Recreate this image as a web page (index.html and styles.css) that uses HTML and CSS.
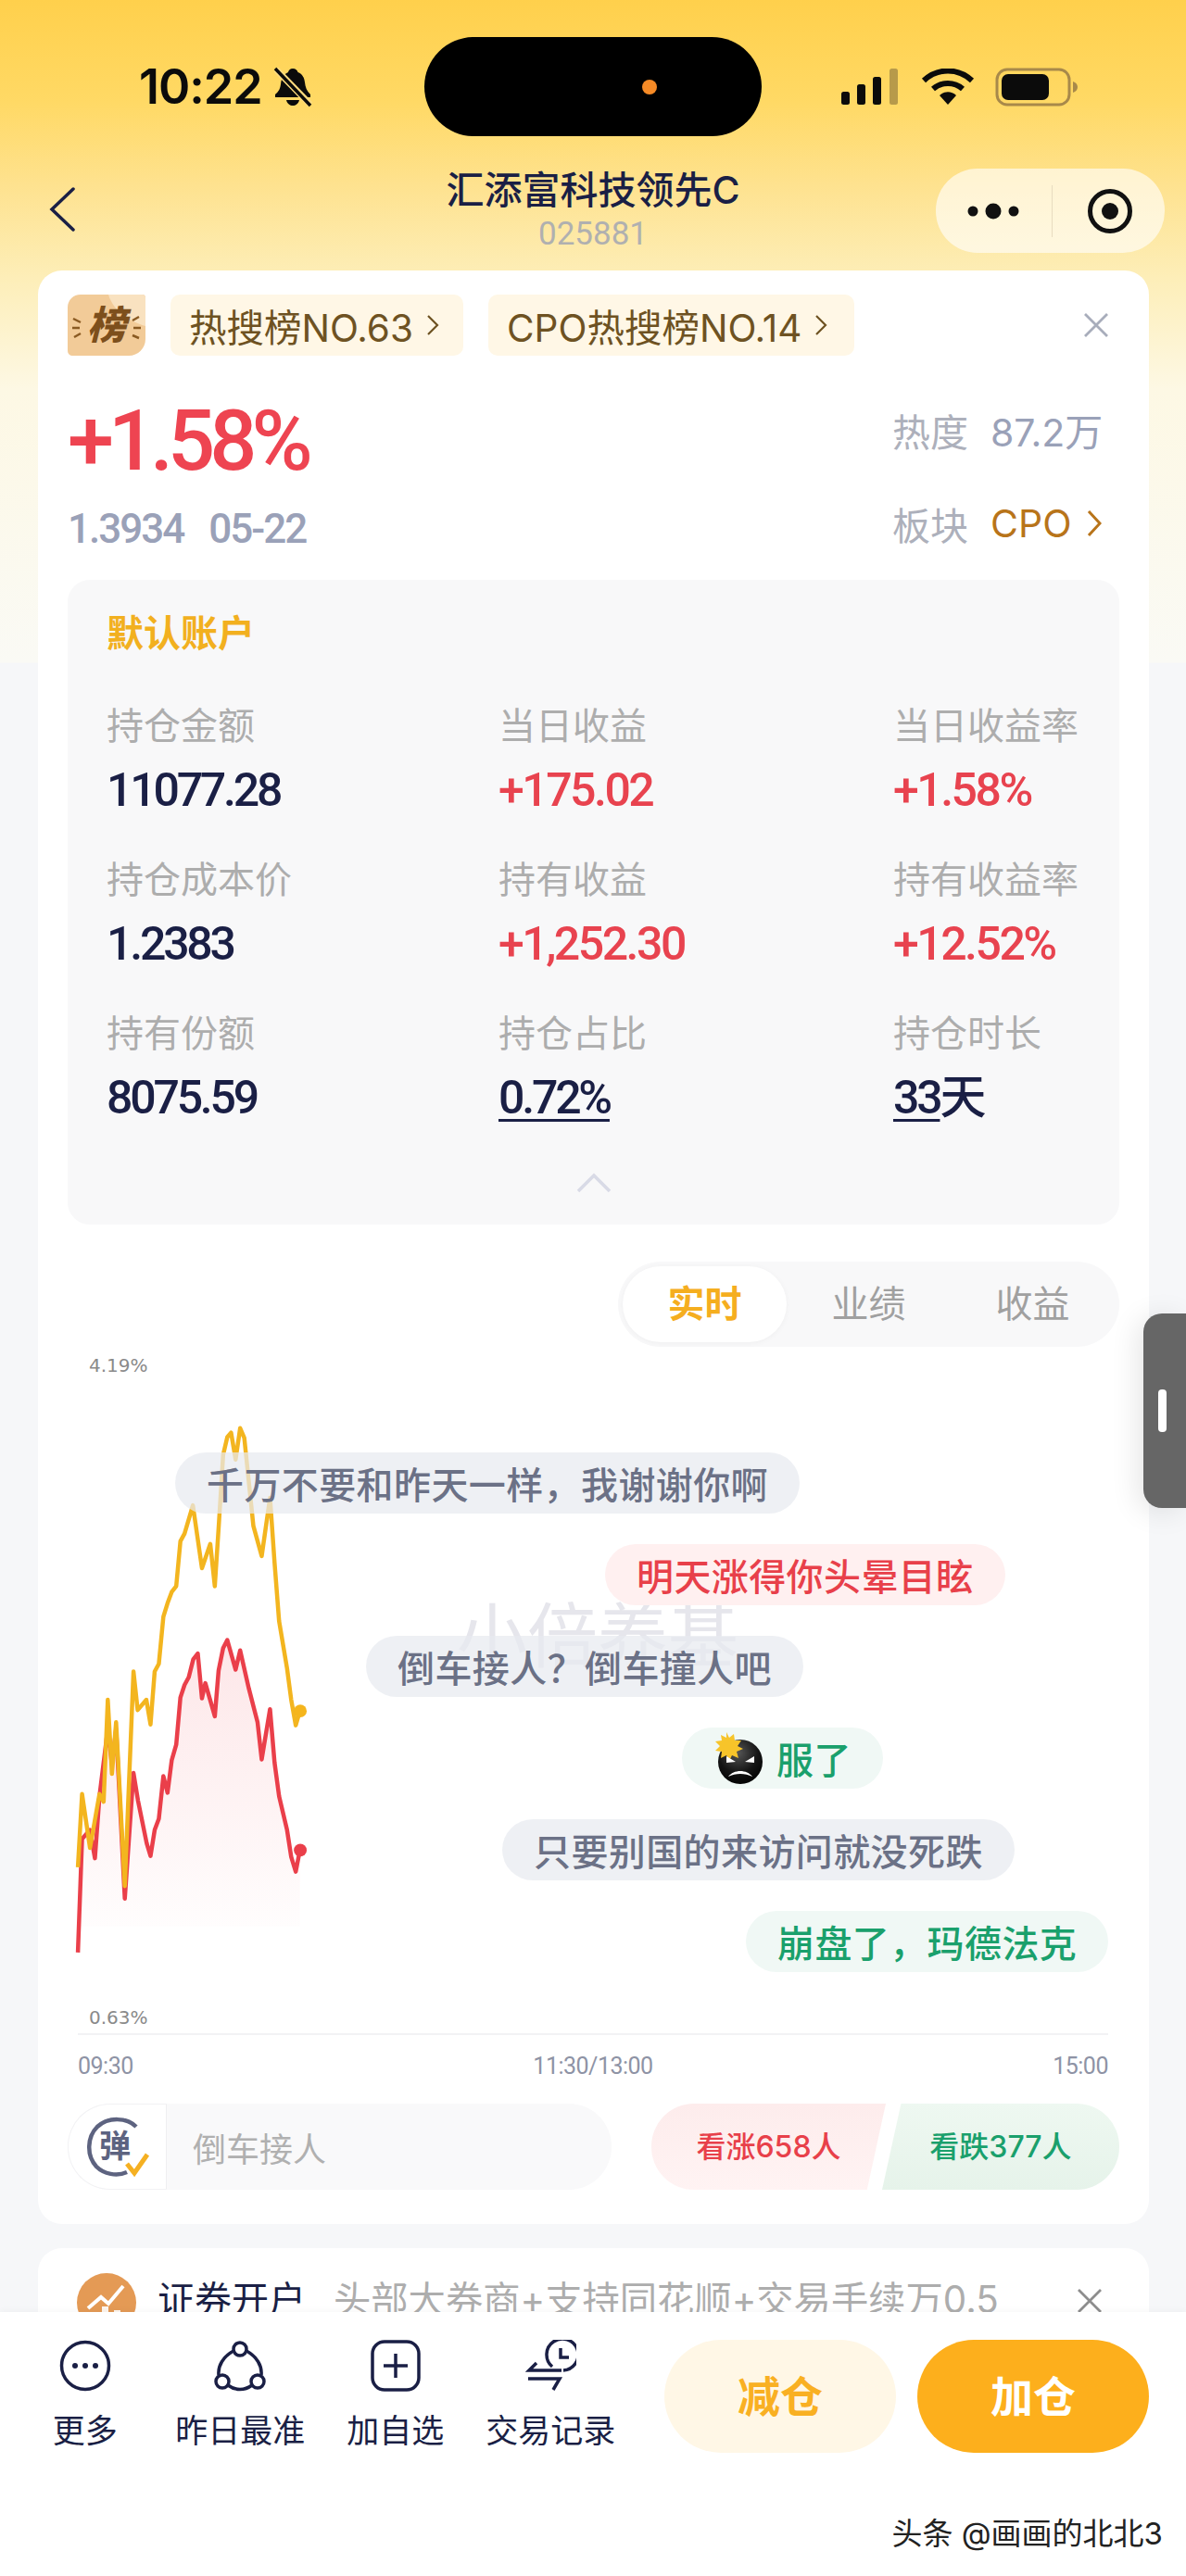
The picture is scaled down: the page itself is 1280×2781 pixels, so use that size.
FILE: index.html

```html
<!DOCTYPE html>
<html lang="zh-CN">
<head>
  <meta charset="UTF-8" />
  <title>汇添富科技领先C</title>
  <link rel="stylesheet" href="styles.css">
</head>
<body>
<div class="page">

  <div class="statusbar">
    <div class="status-left">
      <span class="clock">10:22</span>
      <svg class="bell" width="42" height="44" viewBox="0 0 42 44">
        <path d="M21 2c3 0 5 2 5.500 4 5 2 7 6 7.500 11 .5 5 2 9 6 13v3H2v-3c4-3 5.500-7 6-11 .5-6 3-11 8-13C16.500 4 18 2 21 2z" fill="#0b0b0b"/>
        <path d="M14 36h14c-1 4-4 6-7 6s-6-2-7-6z" fill="#0b0b0b"/>
        <path d="M3 3l37 38" stroke="#fedc7e" stroke-width="7"/>
        <path d="M2 2l38 40" stroke="#0b0b0b" stroke-width="3.500"/>
      </svg>
    </div>
    <div class="island"><i class="island-dot"></i></div>
    <div class="status-right">
      <svg width="64" height="40" viewBox="0 0 64 40">
        <rect x="0" y="25" width="9" height="14" rx="2.500" fill="#0b0b0b"/>
        <rect x="17" y="17" width="9" height="22" rx="2.500" fill="#0b0b0b"/>
        <rect x="34" y="9" width="9" height="30" rx="2.500" fill="#0b0b0b"/>
        <rect x="52" y="0" width="9" height="39" rx="2.500" fill="#b79a4a"/>
      </svg>
      <svg width="58" height="40" viewBox="0 0 58 40">
        <path d="M3 13C18-1 40-1 55 13" fill="none" stroke="#0b0b0b" stroke-width="6"/>
        <path d="M13 22c9-8 23-8 32 0" fill="none" stroke="#0b0b0b" stroke-width="6"/>
        <path d="M20 29c5-5 13-5 18 0L29 39z" fill="#0b0b0b"/>
      </svg>
      <svg width="90" height="42" viewBox="0 0 90 42">
        <rect x="2" y="2" width="78" height="38" rx="11" fill="none" stroke="#a8894a" stroke-width="3"/>
        <rect x="7" y="7" width="51" height="28" rx="7" fill="#0b0b0b"/>
        <path d="M84 15c3 1 5 3 5 6s-2 5-5 6z" fill="#a8894a"/>
      </svg>
    </div>
  </div>

  <div class="navbar">
    <div class="nav-back">
      <svg width="30" height="48" viewBox="0 0 30 48"><path d="M27 2L4 24l23 22" fill="none" stroke="#1a1f45" stroke-width="3.500" stroke-linecap="round"/></svg>
    </div>
    <div class="nav-title">
      <div class="fund-name">汇添富科技领先C</div>
      <div class="fund-code">025881</div>
    </div>
    <div class="capsule">
      <svg class="capsule-dots" width="64" height="20" viewBox="0 0 64 20">
        <circle cx="10" cy="10" r="5.500" fill="#111"/><circle cx="32" cy="10" r="8.500" fill="#111"/><circle cx="54" cy="10" r="5.500" fill="#111"/>
      </svg>
      <i class="capsule-line"></i>
      <svg width="50" height="50" viewBox="0 0 50 50">
        <circle cx="25" cy="25" r="21.500" fill="none" stroke="#111" stroke-width="5"/><circle cx="25" cy="25" r="9" fill="#111"/>
      </svg>
    </div>
  </div>

  <div class="card main-card">
    <div class="tag-row">
      <svg class="rank-badge" width="84" height="66" viewBox="0 0 84 66">
        <path d="M14 0h66c3 0 4 1 4 4v44c0 10-8 18-18 18H6c-4 0-6-2-6-6V14C0 6 6 0 14 0z" fill="#f2cb98"/>
        <path d="M44 0h36c3 0 4 1 4 4v30C70 30 50 20 44 0z" fill="#f9e2c0"/>
        <text x="42" y="48" text-anchor="middle" class="rank-text">榜</text>
        <path d="M6 26l8 4M5 36h8M7 46l7-4M70 28l7-4M71 36h8M70 44l7 3" stroke="#8a5a22" stroke-width="2.500"/>
      </svg>
      <div class="tag tag-one">热搜榜NO.63<svg width="14" height="24" viewBox="0 0 14 24"><path d="M2 2l10 10L2 22" fill="none" stroke="#6e5222" stroke-width="2.200"/></svg></div>
      <div class="tag tag-two">CPO热搜榜NO.14<svg width="14" height="24" viewBox="0 0 14 24"><path d="M2 2l10 10L2 22" fill="none" stroke="#6e5222" stroke-width="2.200"/></svg></div>
      <svg class="tag-close" width="28" height="28" viewBox="0 0 28 28"><path d="M2 2l24 24M26 2L2 26" stroke="#a8adbb" stroke-width="2.800"/></svg>
    </div>

    <div class="quote">
      <div class="quote-left">
        <div class="quote-change">+1.58%</div>
        <div class="quote-sub"><span>1.3934</span><span>05-22</span></div>
      </div>
      <div class="quote-right">
        <div class="quote-row"><span class="quote-label">热度</span><span class="quote-value">87.2万</span></div>
        <div class="quote-row"><span class="quote-label">板块</span><span class="quote-link">CPO</span>
          <svg width="16" height="30" viewBox="0 0 16 30"><path d="M2 2l12 13L2 28" fill="none" stroke="#b8741a" stroke-width="3"/></svg>
        </div>
      </div>
    </div>

    <div class="account">
      <div class="account-title">默认账户</div>
      <div class="account-grid">
        <div class="cell"><div class="cell-label">持仓金额</div><div class="cell-value">11077.28</div></div>
        <div class="cell"><div class="cell-label">当日收益</div><div class="cell-value up">+175.02</div></div>
        <div class="cell"><div class="cell-label">当日收益率</div><div class="cell-value up">+1.58%</div></div>
        <div class="cell"><div class="cell-label">持仓成本价</div><div class="cell-value">1.2383</div></div>
        <div class="cell"><div class="cell-label">持有收益</div><div class="cell-value up">+1,252.30</div></div>
        <div class="cell"><div class="cell-label">持有收益率</div><div class="cell-value up">+12.52%</div></div>
        <div class="cell"><div class="cell-label">持有份额</div><div class="cell-value">8075.59</div></div>
        <div class="cell"><div class="cell-label">持仓占比</div><div class="cell-value"><u>0.72%</u></div></div>
        <div class="cell"><div class="cell-label">持仓时长</div><div class="cell-value"><u>33</u>天</div></div>
      </div>
      <div class="account-fold">
        <svg width="38" height="22" viewBox="0 0 38 22"><path d="M2 20L19 3l17 17" fill="none" stroke="#d8dae6" stroke-width="3.500"/></svg>
      </div>
    </div>

    <div class="tabs-wrap">
      <div class="tabs">
        <div class="tab tab-active">实时</div>
        <div class="tab">业绩</div>
        <div class="tab">收益</div>
      </div>
    </div>

    <div class="chart">
      <div class="plot">
        <div class="watermark">小倍养基</div>
        <svg class="lines" width="640" height="760" viewBox="0 0 1568 1568" preserveAspectRatio="none">
          <defs>
            <linearGradient id="redfill" x1="0" y1="0" x2="0" y2="1">
              <stop offset="0" stop-color="#f0404c" stop-opacity=".13"/>
              <stop offset="1" stop-color="#f0404c" stop-opacity="0"/>
            </linearGradient>
          </defs>
          <polygon fill="url(#redfill)" points="108,1320 108,1378 119,1125 140,1105 153,1168 165,1030 187,880 198,960 209,880 232,1258 255,978 267,1040 290,1135 300,1163 311,1105 322,1080 334,985 345,1022 356,950 368,915 379,810 390,782 401,765 413,725 425,712 436,812 445,778 470,852 480,750 492,700 503,682 525,748 537,705 560,790 583,865 594,948 616,836 628,955 640,1030 661,1105 672,1165 684,1198 695,1150 695,1320"/>
          <polyline class="line line-red" points="108,1378 119,1125 140,1105 153,1168 165,1030 187,880 198,960 209,880 232,1258 255,978 267,1040 290,1135 300,1163 311,1105 322,1080 334,985 345,1022 356,950 368,915 379,810 390,782 401,765 413,725 425,712 436,812 445,778 470,852 480,750 492,700 503,682 525,748 537,705 560,790 583,865 594,948 616,836 628,955 640,1030 661,1105 672,1165 684,1198 695,1150"/>
          <polyline class="line line-yellow" points="108,1188 119,1025 140,1145 165,1025 176,1042 187,815 198,980 209,865 232,1230 255,752 266,838 289,815 300,870 311,752 322,735 334,630 345,600 356,575 368,562 379,462 390,445 412,382 436,522 458,468 470,562 481,420 492,270 503,230 513,220 525,280 537,210 548,232 560,330 572,428 594,495 616,365 628,510 640,640 661,745 672,815 684,872 695,840"/>
          <ellipse cx="696" cy="840" rx="17" ry="14" fill="#f5b51c"/>
          <ellipse cx="696" cy="1150" rx="17" ry="14" fill="#ea3f4a"/>
        </svg>
        <div class="scale scale-top">4.19%</div>
        <div class="scale scale-bottom">0.63%</div>
        <div class="bubble bubble-a">千万不要和昨天一样，我谢谢你啊</div>
        <div class="bubble bubble-b bubble-red">明天涨得你头晕目眩</div>
        <div class="bubble bubble-c">倒车接人？倒车撞人吧</div>
        <div class="bubble bubble-d bubble-green">
          <svg class="bomb" width="54" height="56" viewBox="0 0 54 56">
            <defs>
              <radialGradient id="bombfill" cx=".45" cy=".3" r=".75"><stop offset="0" stop-color="#555"/><stop offset=".6" stop-color="#141414"/><stop offset="1" stop-color="#000"/></radialGradient>
            </defs>
            <circle cx="29" cy="32" r="24" fill="url(#bombfill)"/>
            <path d="M14 0l3 6 5-4 1 7 7 0-4 6 6 3-7 3 2 7-7-3-3 6-3-6-6 3 1-7-7-1 5-5-5-5 7-1-1-6 6 3z" fill="#f7c42a"/>
            <path d="M14 26l10 6-10 1zM44 26l-10 6 10 1z" fill="#fff"/>
            <path d="M16 48c6-8 20-8 26 0-8-4-18-4-26 0z" fill="#fff"/>
          </svg>
          <span>服了</span>
        </div>
        <div class="bubble bubble-e">只要别国的来访问就没死跌</div>
        <div class="bubble bubble-f bubble-green">崩盘了，玛德法克</div>
      </div>
      <div class="axis-line"></div>
      <div class="axis-times"><span>09:30</span><span>11:30/13:00</span><span>15:00</span></div>
    </div>

    <div class="comment-row">
      <div class="comment-input">
        <div class="comment-icon">
          <svg width="72" height="72" viewBox="0 0 72 72">
            <path d="M56 14C46 4 26 3 14 14 3 25 2 45 13 57c8 8 22 11 33 6" fill="none" stroke="#5d6380" stroke-width="4.500"/>
            <text x="33" y="47" text-anchor="middle" class="comment-glyph">弹</text>
            <path d="M46 54l8 10 14-20" fill="none" stroke="#f5b022" stroke-width="5"/>
          </svg>
        </div>
        <span class="comment-text">倒车接人</span>
      </div>
      <div class="vote">
        <div class="vote-up">看涨658人</div>
        <div class="vote-down">看跌377人</div>
      </div>
    </div>
  </div>

  <div class="card promo-card">
    <svg class="promo-icon" width="64" height="64" viewBox="0 0 64 64">
      <circle cx="32" cy="32" r="32" fill="#e49a55"/>
      <path d="M14 58V44h7v14zM27 58V36h7v22zM40 58V40h7v18z" fill="#fff" opacity=".9"/>
      <path d="M12 38l14-12 8 7 16-19" fill="none" stroke="#fff" stroke-width="4"/>
    </svg>
    <span class="promo-title">证券开户</span>
    <span class="promo-desc">头部大券商+支持同花顺+交易手续万0.5</span>
    <svg class="promo-close" width="28" height="28" viewBox="0 0 28 28"><path d="M2 2l24 24M26 2L2 26" stroke="#8d8d8d" stroke-width="2.800"/></svg>
  </div>

  <div class="side-handle"><i></i></div>

  <div class="bottombar">
    <div class="tools">
      <div class="tool">
        <svg width="56" height="56" viewBox="0 0 56 56"><circle cx="28" cy="28" r="25.500" fill="none" stroke="#1a1f45" stroke-width="3.500"/><circle cx="17" cy="28" r="3" fill="#1a1f45"/><circle cx="28" cy="28" r="3" fill="#1a1f45"/><circle cx="39" cy="28" r="3" fill="#1a1f45"/></svg>
        <span>更多</span>
      </div>
      <div class="tool">
        <svg width="56" height="56" viewBox="0 0 56 56" fill="none" stroke="#1a1f45" stroke-width="3.500">
          <circle cx="28" cy="10" r="7"/><circle cx="9" cy="45" r="7"/><circle cx="47" cy="45" r="7"/>
          <path d="M21 12C10 18 4 28 5 38M35 12c11 6 17 16 16 26M15 49c8 6 18 6 26 0"/>
        </svg>
        <span>昨日最准</span>
      </div>
      <div class="tool">
        <svg width="56" height="56" viewBox="0 0 56 56" fill="none" stroke="#1a1f45" stroke-width="3.500">
          <rect x="3" y="2" width="50" height="52" rx="13"/><path d="M28 15v26M15 28h26"/>
        </svg>
        <span>加自选</span>
      </div>
      <div class="tool">
        <svg width="56" height="56" viewBox="0 0 56 56" fill="none" stroke="#1a1f45" stroke-width="3.500">
          <path d="M30 29a17 17 0 1 1 12 4"/><path d="M39 9v10h9"/>
          <path d="M40 33H5l8-8M4 42h34l-7 12"/>
        </svg>
        <span>交易记录</span>
      </div>
    </div>
    <div class="actions">
      <div class="btn btn-sell">减仓</div>
      <div class="btn btn-buy">加仓</div>
    </div>
    <div class="credit">头条 @画画的北北3</div>
  </div>

</div>
</body>
</html>
```

FILE: styles.css

```css
* {
  box-sizing: border-box;
}
body {
  margin: 0;
  font-family: Inter, "Noto Sans CJK SC", sans-serif;
  color: #1a1f45;
}
svg {
  display: block;
}
.page {
  position: relative;
  width: 1280px;
  height: 2781px;
  overflow: hidden;
  background: linear-gradient(180deg, #ffd04c 0, #ffd965 110px, #fee28f 200px, #fdeeb8 300px, #fdf8e4 420px, #fafaf5 715px, #f6f7f9 716px);
}

/* status bar */
.statusbar {
  display: grid;
  grid-template-columns: 458px 364px 1fr;
  height: 182px;
  padding-top: 40px;
}
.status-left {
  display: flex;
  align-items: center;
  height: 107px;
  padding-left: 150px;
  gap: 12px;
}
.clock {
  font-size: 52px;
  font-weight: 600;
  color: #0b0b0b;
  letter-spacing: -1px;
}
.island {
  display: flex;
  align-items: center;
  height: 107px;
  padding-left: 235px;
  background: #000;
  border-radius: 54px;
}
.island-dot {
  width: 16px;
  height: 16px;
  border-radius: 50%;
  background: #f58a26;
}
.status-right {
  display: flex;
  align-items: center;
  height: 107px;
  padding-left: 86px;
  gap: 22px;
}

/* nav */
.navbar {
  display: grid;
  grid-template-columns: 320px 640px 1fr;
  height: 110px;
}
.nav-back {
  padding: 20px 0 0 52px;
}
.nav-title {
  text-align: center;
}
.fund-name {
  margin-top: 3px;
  font-size: 41px;
  line-height: 40px;
  font-weight: 500;
  color: #1a1f45;
}
.fund-code {
  margin-top: 9px;
  font-size: 35px;
  line-height: 38px;
  font-family: Roboto, sans-serif;
  color: #b0b0b0;
}
.capsule {
  display: flex;
  align-items: center;
  width: 247px;
  height: 91px;
  margin-left: 50px;
  border-radius: 45px;
  background: rgba(255, 255, 255, .62);
}
.capsule-dots {
  margin-left: 30px;
}
.capsule-line {
  width: 1px;
  height: 56px;
  margin: 0 37px 0 31px;
  background: #e8dcc0;
}

/* cards */
.card {
  width: 1199px;
  margin-left: 41px;
  background: #fff;
  border-radius: 26px;
}
.main-card {
  height: 2109px;
  padding: 26px 32px 0;
}
.tag-row {
  display: flex;
  align-items: center;
  height: 66px;
}
.rank-text {
  font-size: 42px;
  font-weight: 900;
  font-style: italic;
  fill: #7d4f1c;
}
.tag {
  display: flex;
  align-items: center;
  height: 66px;
  padding-left: 20px;
  gap: 14px;
  font-size: 40.500px;
  color: #6e5222;
  background: #fff7e6;
  border-radius: 10px;
  white-space: nowrap;
}
.tag-one {
  width: 316px;
  margin-left: 27px;
}
.tag-two {
  width: 395px;
  margin-left: 27px;
}
.tag-close {
  margin-left: auto;
  margin-right: 11px;
}

/* quote */
.quote {
  display: flex;
  justify-content: space-between;
  margin-top: 48px;
}
.quote-change {
  font-family: Roboto, sans-serif;
  font-size: 90px;
  line-height: 90px;
  font-weight: 500;
  letter-spacing: -6px;
  color: #ee4451;
}
.quote-sub {
  display: flex;
  gap: 27px;
  margin-top: 27px;
  font-family: Roboto, sans-serif;
  font-size: 44px;
  line-height: 44px;
  font-weight: 500;
  letter-spacing: -2px;
  color: #9aa1b8;
}
.quote-right {
  width: 245px;
  padding-top: 7px;
}
.quote-row {
  display: flex;
  align-items: center;
  height: 50px;
  font-size: 41px;
}
.quote-row + .quote-row {
  margin-top: 51px;
}
.quote-label {
  width: 106px;
  color: #adb0bb;
}
.quote-value {
  color: #9aa1b8;
}
.quote-link {
  margin-right: 16px;
  color: #b8741a;
}

/* account panel */
.account {
  height: 696px;
  margin-top: 33px;
  padding: 33px 0 0 42px;
  background: #f8f8f9;
  border-radius: 24px;
}
.account-title {
  font-size: 40px;
  line-height: 50px;
  font-weight: 700;
  color: #f2b01f;
}
.account-grid {
  display: grid;
  grid-template-columns: 423px 426px 1fr;
  row-gap: 42px;
  margin-top: 50px;
}
.cell-label {
  font-size: 40px;
  line-height: 50px;
  color: #adadad;
}
.cell-value {
  margin-top: 14px;
  font-family: Roboto, "Noto Sans CJK SC", sans-serif;
  font-size: 50px;
  line-height: 60px;
  font-weight: 500;
  letter-spacing: -3.200px;
  color: #1a1f45;
}
.cell-value u {
  text-decoration-thickness: 3px;
  text-underline-offset: 6px;
}
.cell-value.up {
  letter-spacing: -2.500px;
  color: #e8434f;
}
.account-fold {
  display: flex;
  justify-content: center;
  margin: 51px 0 0 -42px;
}

/* tabs */
.tabs-wrap {
  display: flex;
  justify-content: flex-end;
  margin-top: 40px;
}
.tabs {
  display: grid;
  grid-template-columns: repeat(3, 177px);
  width: 541px;
  height: 92px;
  padding: 5px;
  background: #f8f8f9;
  border-radius: 46px;
}
.tab {
  font-size: 40px;
  line-height: 82px;
  text-align: center;
  color: #a0a0a0;
}
.tab-active {
  font-weight: 700;
  color: #f5ae1f;
  background: #fff;
  border-radius: 41px;
  box-shadow: 0 1px 6px rgba(0, 0, 0, .04);
}

/* chart */
.chart {
  margin: 0 -32px;
}
.plot {
  position: relative;
  height: 741px;
}
.lines {
  position: absolute;
  left: -1px;
  top: -14px;
}
.line {
  fill: none;
  stroke-width: 4.500px;
  stroke-linejoin: round;
  vector-effect: non-scaling-stroke;
}
.line-red {
  stroke: #ea3f4a;
}
.line-yellow {
  stroke: #f3b51f;
}
.watermark {
  position: absolute;
  left: 452px;
  top: 272px;
  font-size: 76px;
  line-height: 80px;
  color: #e6e6ec;
  white-space: nowrap;
}
.scale {
  position: absolute;
  left: 55px;
  font-family: "DejaVu Sans", sans-serif;
  font-size: 20px;
  line-height: 28px;
  color: #8a8a8a;
}
.scale-top {
  top: 6px;
}
.scale-bottom {
  top: 710px;
}
.bubble {
  position: absolute;
  display: flex;
  align-items: center;
  height: 66px;
  padding: 0 34px;
  font-size: 40px;
  font-weight: 500;
  letter-spacing: .4px;
  color: #6b7186;
  background: rgba(232, 234, 240, .72);
  border-radius: 33px;
  white-space: nowrap;
}
.bubble-red {
  color: #e8404a;
  background: #fff0f0;
}
.bubble-green {
  color: #1aa06c;
  background: #f0f8f5;
}
.bubble-a { left: 148px; top: 114px; }
.bubble-b { left: 612px; top: 213px; }
.bubble-c { left: 354px; top: 312px; }
.bubble-d { left: 695px; top: 411px; gap: 14px; }
.bubble-e { left: 501px; top: 510px; }
.bubble-f { left: 764px; top: 609px; }
.axis-line {
  height: 2px;
  margin: 0 44px 0 43px;
  background: #f2f2f4;
}
.axis-times {
  display: flex;
  justify-content: space-between;
  margin: 20px 44px 0 43px;
  font-family: Roboto, sans-serif;
  font-size: 25px;
  line-height: 28px;
  letter-spacing: -.5px;
  color: #8e93a5;
}

/* comment + vote */
.comment-row {
  display: flex;
  justify-content: space-between;
  margin-top: 26px;
}
.comment-input {
  display: flex;
  align-items: center;
  width: 587px;
  height: 93px;
  background: #f9f9fa;
  border-radius: 46px;
}
.comment-icon {
  display: flex;
  align-items: center;
  justify-content: center;
  width: 107px;
  height: 93px;
  background: #fff;
  border: 1px solid #f2f2f4;
  border-right-color: #efeff1;
  border-radius: 46px 0 0 46px;
}
.comment-glyph {
  font-size: 34px;
  font-weight: 700;
  fill: #5d6380;
}
.comment-text {
  margin-left: 28px;
  font-size: 36px;
  color: #b0b0b0;
}
.vote {
  display: flex;
  width: 505px;
  font-size: 32px;
  font-weight: 500;
  line-height: 93px;
  text-align: center;
}
.vote-up {
  width: 253px;
  height: 93px;
  color: #e8404a;
  background: linear-gradient(180deg, #fdecec, #fff3f3);
  border-radius: 46px 0 0 46px;
  clip-path: polygon(0 0, 100% 0, 92% 100%, 0 100%);
}
.vote-down {
  width: 256px;
  height: 93px;
  margin-left: -4px;
  color: #1aa06c;
  background: linear-gradient(180deg, #eef8f1, #e6f3ea);
  border-radius: 0 46px 46px 0;
  clip-path: polygon(8% 0, 100% 0, 100% 100%, 0 100%);
}

/* second card, cut by the bottom bar */
.promo-card {
  display: flex;
  align-items: flex-start;
  height: 300px;
  margin-top: 26px;
  padding: 27px 0 0 42px;
}
.promo-title {
  margin-left: 23px;
  font-size: 40px;
  line-height: 58px;
  white-space: nowrap;
}
.promo-desc {
  margin-left: 30px;
  font-size: 40.300px;
  line-height: 58px;
  color: #adadad;
  white-space: nowrap;
}
.promo-close {
  margin: 16px 0 0 84px;
}

/* floating handle */
.side-handle {
  position: absolute;
  left: 1234px;
  top: 1418px;
  display: flex;
  align-items: center;
  width: 46px;
  height: 210px;
  padding-left: 16px;
  background: #666;
  border-radius: 20px 0 0 20px;
  box-shadow: -6px 4px 30px rgba(0, 0, 0, .1);
}
.side-handle i {
  width: 9px;
  height: 46px;
  background: #fff;
  border-radius: 4px;
}

/* bottom bar */
.bottombar {
  position: absolute;
  left: 0;
  bottom: 0;
  display: flex;
  width: 1280px;
  height: 285px;
  padding-top: 30px;
  background: #fff;
  box-shadow: 0 -2px 6px rgba(0, 0, 0, .03);
}
.tools {
  display: grid;
  grid-template-columns: repeat(4, 167.500px);
  margin-left: 8px;
  height: 120px;
}
.tool {
  display: flex;
  flex-direction: column;
  align-items: center;
  gap: 20px;
  font-size: 35px;
  line-height: 44px;
  color: #1a1f45;
  white-space: nowrap;
}
.actions {
  display: flex;
  gap: 23px;
  margin-left: 39px;
}
.btn {
  width: 250px;
  height: 122px;
  font-size: 46px;
  font-weight: 700;
  line-height: 122px;
  text-align: center;
  border-radius: 61px;
}
.btn-sell {
  color: #f9b022;
  background: #fff7e6;
}
.btn-buy {
  color: #fff;
  background: #fdaf1c;
}
.credit {
  position: absolute;
  right: 25px;
  bottom: 26px;
  font-size: 33px;
  line-height: 40px;
  color: #222;
  text-shadow: 0 0 2px #fff;
  white-space: nowrap;
}
```
